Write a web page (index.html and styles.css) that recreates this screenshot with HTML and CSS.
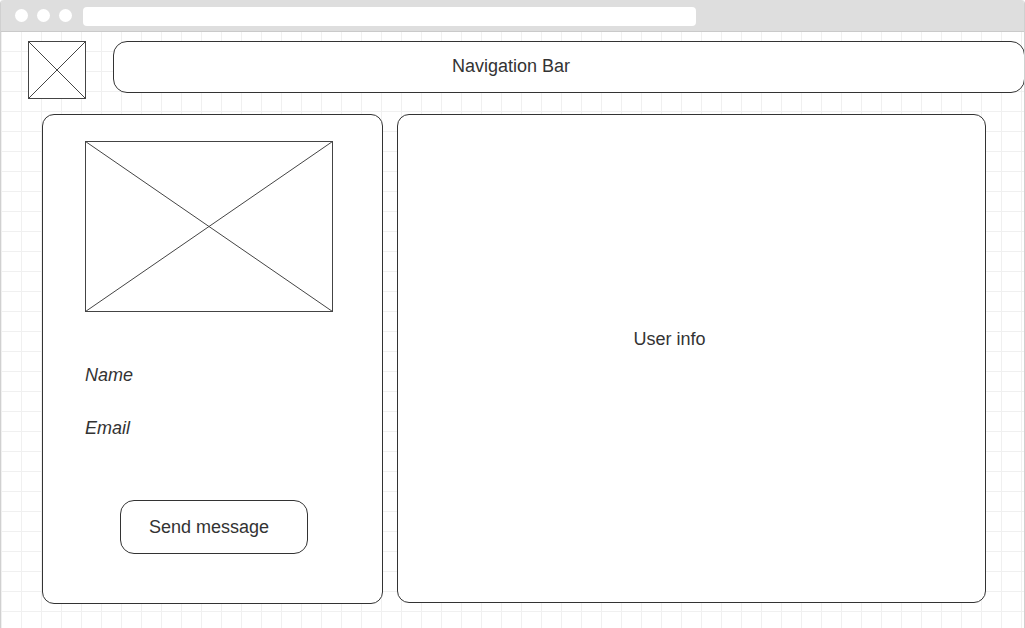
FILE: index.html
```html
<!DOCTYPE html>
<html lang="en">
<head>
    <meta charset="UTF-8">
    <meta name="viewport" content="width=device-width, initial-scale=1.0">
    <title>Profile Wireframe</title>
    <link rel="stylesheet" href="styles.css">
</head>
<body>
    <div class="window">
        <!-- fake browser chrome -->
        <div class="topbar">
            <div class="dots">
                <span class="dot"></span>
                <span class="dot"></span>
                <span class="dot"></span>
            </div>
            <div class="address"></div>
        </div>

        <div class="canvas">
            <div class="header">
                <svg class="logo" width="58" height="58" viewBox="0 0 58 58">
                    <rect x="0.5" y="0.5" width="57" height="57" fill="#fff" stroke="#444"/>
                    <line x1="0.5" y1="0.5" x2="57.5" y2="57.5" stroke="#444"/>
                    <line x1="57.5" y1="0.5" x2="0.5" y2="57.5" stroke="#444"/>
                </svg>
                <div class="navbar">Navigation Bar</div>
            </div>

            <div class="main">
                <div class="card profile">
                    <svg class="photo" width="248" height="171" viewBox="0 0 248 171">
                        <rect x="0.5" y="0.5" width="247" height="170" fill="#fff" stroke="#444"/>
                        <line x1="0.5" y1="0.5" x2="247.5" y2="170.5" stroke="#444"/>
                        <line x1="247.5" y1="0.5" x2="0.5" y2="170.5" stroke="#444"/>
                    </svg>
                    <div class="field name">Name</div>
                    <div class="field email">Email</div>
                    <button class="send">Send message</button>
                </div>
                <div class="card info">User info</div>
            </div>
        </div>
    </div>
</body>
</html>
```

FILE: styles.css
```css
/* wireframe page */
html, body {
    margin: 0;
    padding: 0;
    height: 100%;
}
body {
    font-family: "Liberation Sans", Arial, sans-serif;
    color: #333;
    background: #fff;
}
.window {
    height: 628px;
    box-sizing: border-box;
    border-left: 1px solid #d0d0d0;
    border-right: 1px solid #d0d0d0;
    border-top-left-radius: 4px;
    border-top-right-radius: 4px;
    overflow: hidden;
    background-color: #fff;
    background-image:
        linear-gradient(to right, transparent 19px, #f0f0f0 19px),
        linear-gradient(to bottom, transparent 19px, #f0f0f0 19px);
    background-size: 20px 20px;
    background-position: 1px 12px;
}
.topbar {
    height: 31px;
    background: #dedede;
    border-bottom: 1px solid #cacaca;
    display: flex;
    align-items: center;
    padding-left: 14px;
}
.dots {
    display: flex;
    gap: 9px;
}
.dot {
    width: 13px;
    height: 13px;
    border-radius: 50%;
    background: #fff;
}
.address {
    margin-left: 11px;
    width: 613px;
    height: 19px;
    background: #fff;
    border-radius: 4px;
    margin-top: 1px;
}
.canvas {
    padding: 9px 0 0 27px;
}
.header {
    display: flex;
    align-items: flex-start;
    gap: 27px;
}
.logo {
    display: block;
    flex: none;
}
.navbar {
    flex: 1;
    height: 50px;
    box-sizing: border-box;
    height: 52px;
    border: 1px solid #333;
    border-radius: 14px;
    background: #fff;
    display: flex;
    align-items: center;
    justify-content: center;
    font-size: 18px;
    padding: 0 116px 2px 0;
    margin-right: -1px;
}
.main {
    display: flex;
    gap: 14px;
    margin-top: 15px;
    margin-left: 14px;
}
.card {
    border: 1px solid #333;
    border-radius: 12px;
    background: #fff;
    box-sizing: border-box;
}
.profile {
    width: 341px;
    height: 490px;
    padding: 26px 0 0 42px;
    display: flex;
    flex-direction: column;
}
.photo {
    display: block;
}
.field {
    font-size: 18px;
    font-style: italic;
    line-height: 21px;
}
.name {
    margin-top: 53px;
}
.email {
    margin-top: 32px;
}
.send {
    margin-top: 61px;
    margin-left: 35px;
    width: 188px;
    height: 54px;
    border: 1px solid #333;
    border-radius: 14px;
    background: #fff;
    font-family: inherit;
    font-size: 18px;
    color: #333;
    padding: 0 10px 0 0;
}
.info {
    width: 589px;
    height: 489px;
    display: flex;
    justify-content: center;
    align-items: flex-start;
    padding: 214px 44px 0 0;
    font-size: 18px;
}
```
